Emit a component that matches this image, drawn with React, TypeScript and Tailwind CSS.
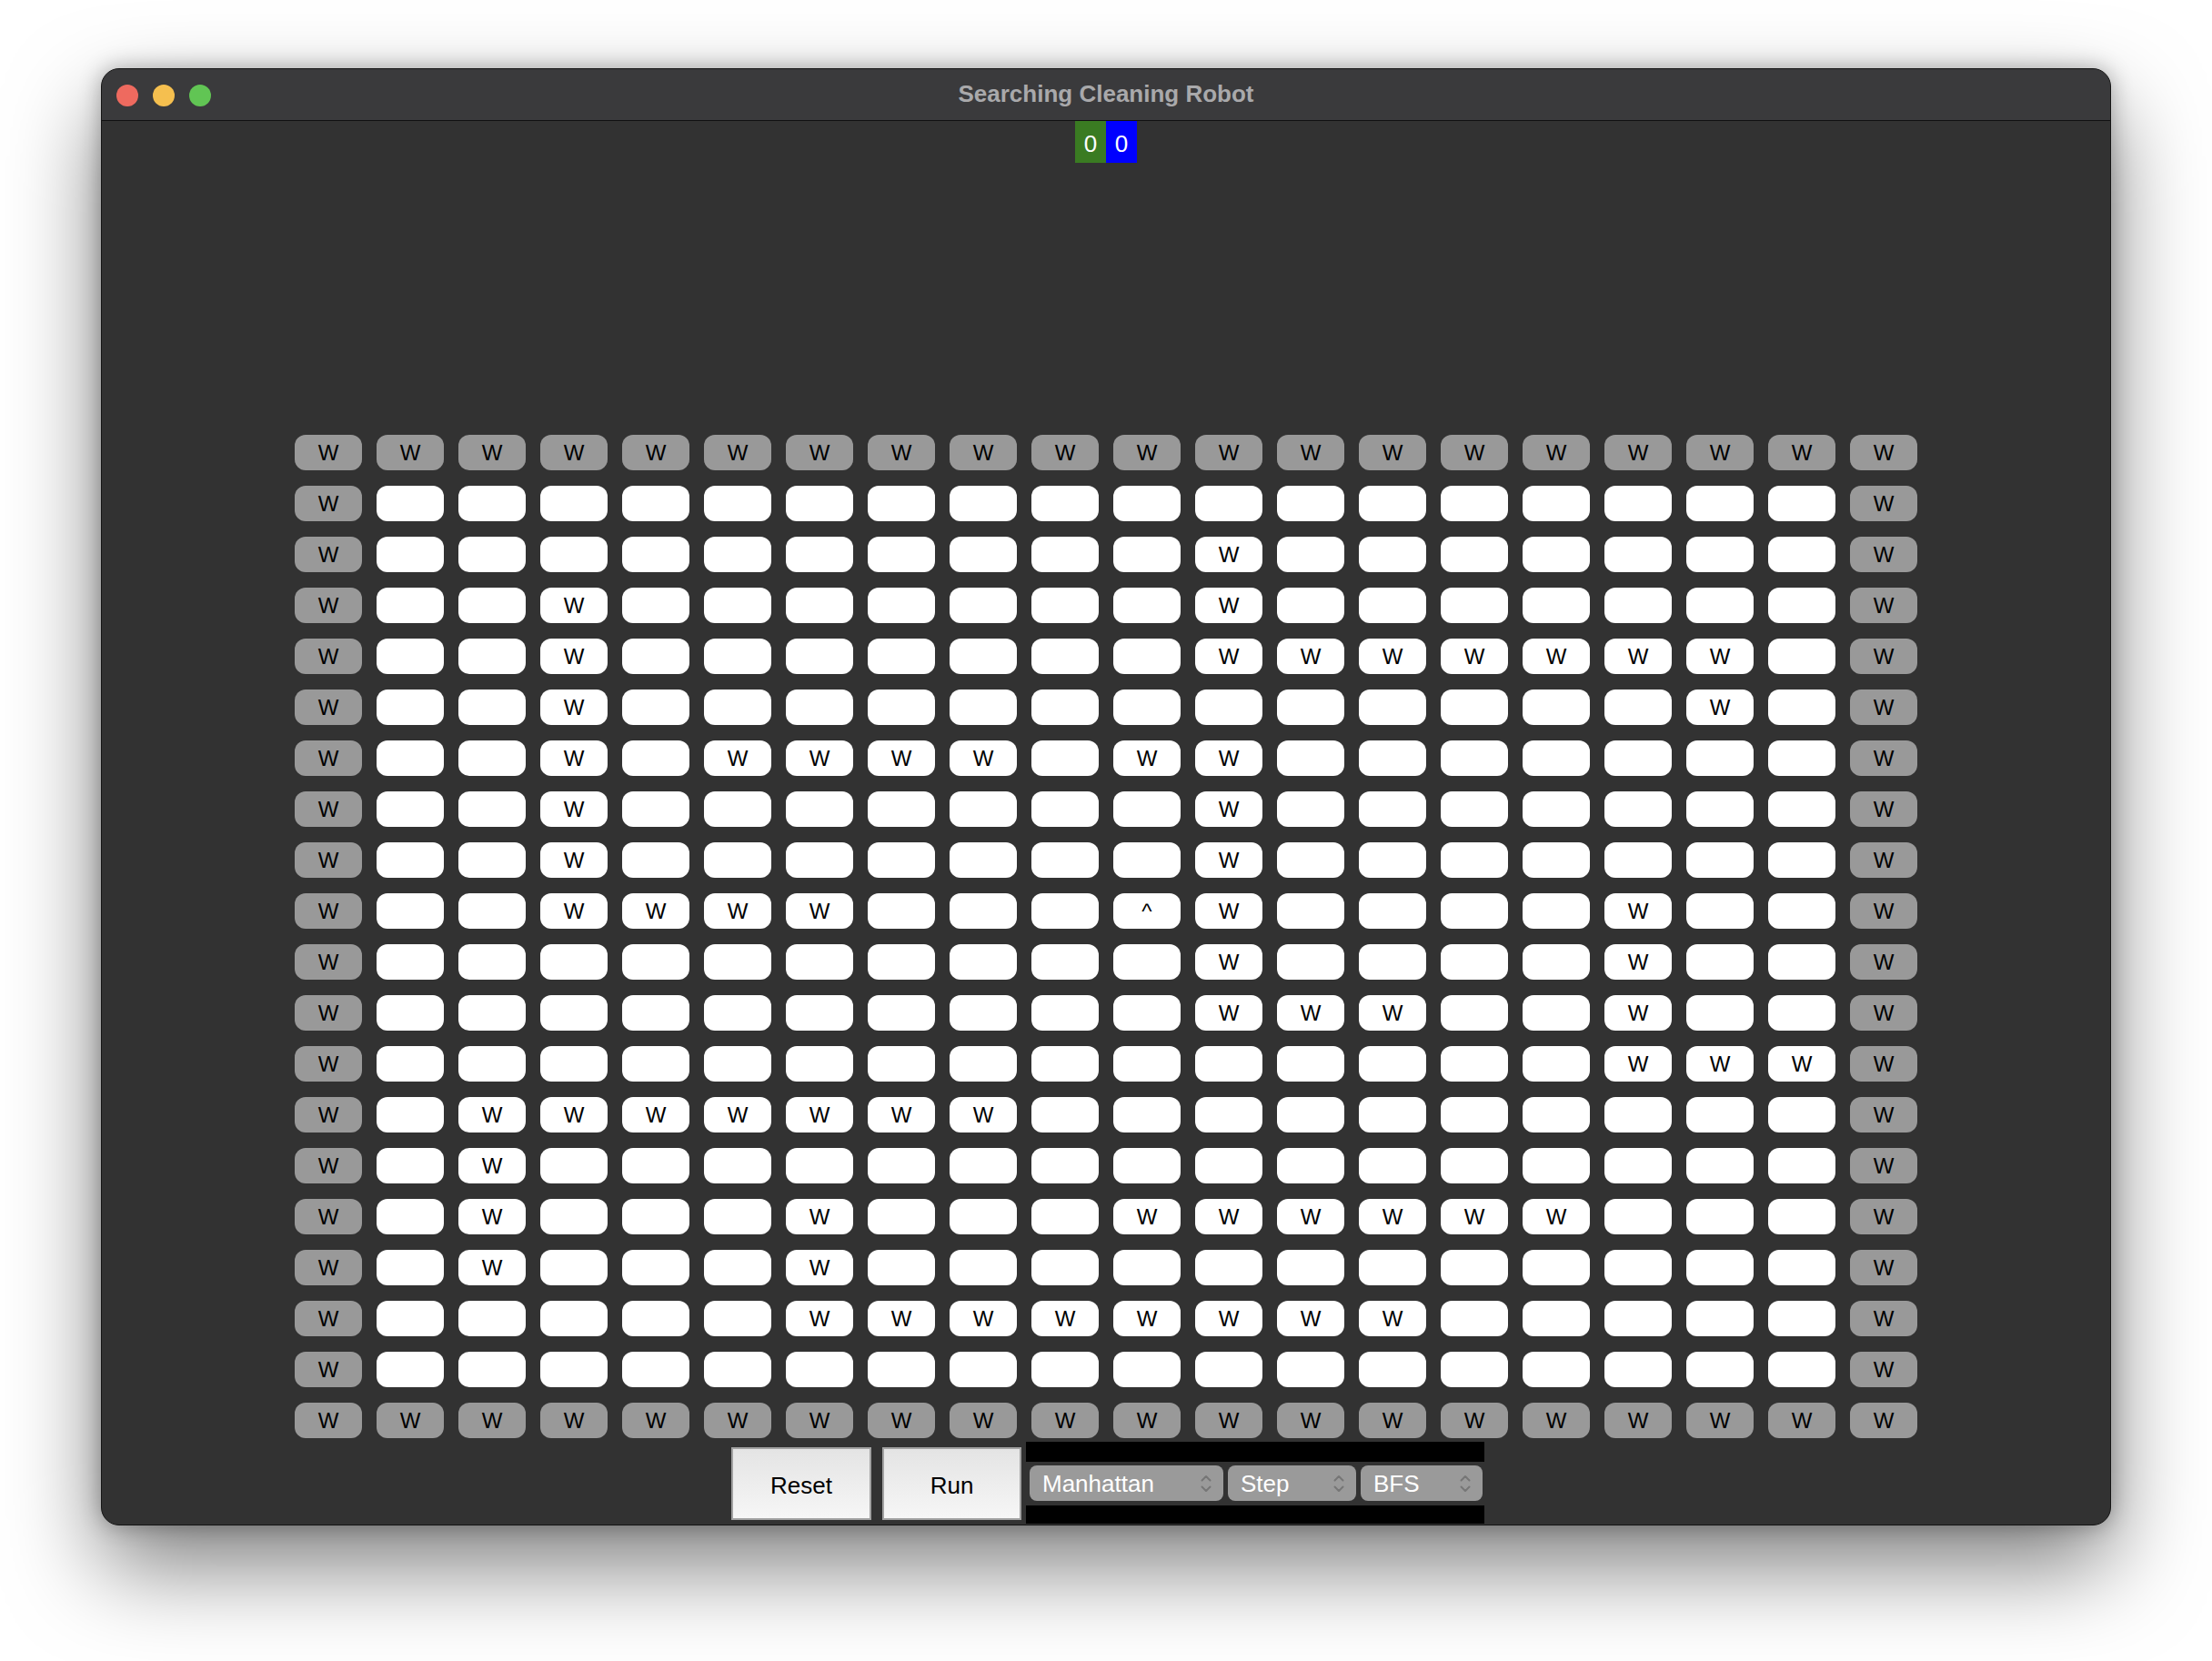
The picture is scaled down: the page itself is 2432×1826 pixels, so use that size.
import React from "react";

const WALLS: Record<number, number[]> = {
  2: [11],
  3: [3, 11],
  4: [3, 11, 12, 13, 14, 15, 16, 17],
  5: [3, 17],
  6: [3, 5, 6, 7, 8, 10, 11],
  7: [3, 11],
  8: [3, 11],
  9: [3, 4, 5, 6, 11, 16],
  10: [11, 16],
  11: [11, 12, 13, 16],
  12: [16, 17, 18],
  13: [2, 3, 4, 5, 6, 7, 8],
  14: [2],
  15: [2, 6, 10, 11, 12, 13, 14, 15],
  16: [2, 6],
  17: [6, 7, 8, 9, 10, 11, 12, 13],
};

type Kind = "edge" | "wall" | "empty" | "robot";

function cellKind(r: number, c: number): Kind {
  if (r === 0 || r === 19 || c === 0 || c === 19) return "edge";
  if (r === 9 && c === 10) return "robot";
  if ((WALLS[r] || []).includes(c)) return "wall";
  return "empty";
}

function Chevrons() {
  return (
    <svg width="14" height="22" viewBox="0 0 14 22" fill="none" stroke="#767676" strokeWidth="2" strokeLinecap="round" strokeLinejoin="round">
      <path d="M2.5 7.5 L7 3 L11.5 7.5" />
      <path d="M2.5 14.5 L7 19 L11.5 14.5" />
    </svg>
  );
}

function Select({ label, width }: { label: string; width: string }) {
  return (
    <div className={`${width} h-[39px] rounded-[8px] bg-[#9a9a9a] flex items-center justify-between pl-[14px] pr-[12px]`}>
      <span className="text-white text-[26px] leading-none">{label}</span>
      <Chevrons />
    </div>
  );
}

export default function App() {
  const rows = Array.from({ length: 20 }, (_, r) => r);
  const cols = Array.from({ length: 20 }, (_, c) => c);
  return (
    <div className="min-h-[1826px] w-full bg-white pt-[75px] pl-[111px] font-['Liberation_Sans',Arial,sans-serif]">
      <div className="w-[2210px] h-[1602px] rounded-[20px] border border-[#151515] bg-[#323232] overflow-hidden flex flex-col shadow-[0_45px_100px_rgba(0,0,0,0.5),0_0_24px_rgba(0,0,0,0.3)]">
        {/* Title bar */}
        <div className="h-[57px] shrink-0 bg-[#3a3a3c] border-b border-[#111] grid grid-cols-[1fr_auto_1fr] items-center">
          <div className="flex items-center gap-[16px] pl-[16px] pt-[1px]">
            <div className="w-[24px] h-[24px] rounded-full bg-[#ee6a5f]" />
            <div className="w-[24px] h-[24px] rounded-full bg-[#f5bf4f]" />
            <div className="w-[24px] h-[24px] rounded-full bg-[#61c554]" />
          </div>
          <div className="text-[26px] font-bold text-[#a9a9ab] leading-none pb-[3px]">Searching Cleaning Robot</div>
          <div />
        </div>

        {/* Score */}
        <div className="h-[46px] shrink-0 flex justify-center">
          <div className="w-[34px] h-[46px] bg-[#3a7b22] text-white text-[26px] flex items-center justify-center pt-[5px]">0</div>
          <div className="w-[34px] h-[46px] bg-[#0000ff] text-white text-[26px] flex items-center justify-center pt-[5px]">0</div>
        </div>

        {/* Grid */}
        <div className="mt-[299px] flex justify-center">
          <div className="grid grid-cols-[repeat(20,74px)] grid-rows-[repeat(20,39px)] gap-x-[16px] gap-y-[17px]">
            {rows.map((r) =>
              cols.map((c) => {
                const k = cellKind(r, c);
                const bg = k === "edge" ? "bg-[#999999]" : "bg-white";
                const txt = k === "edge" || k === "wall" ? "W" : k === "robot" ? "^" : "";
                return (
                  <div
                    key={`${r}-${c}`}
                    className={`${bg} rounded-[12px] flex items-center justify-center text-black text-[24px] leading-none`}
                  >
                    {txt}
                  </div>
                );
              })
            )}
          </div>
        </div>

        {/* Controls */}
        <div className="mt-[4px] h-[90px] shrink-0 flex justify-center items-center pl-[4px]">
          <button className="mt-[2px] w-[154px] h-[80px] border-2 border-[#a2a2a2] bg-gradient-to-b from-[#e4e4e4] to-[#f6f6f6] text-black text-[26px] pt-[4px]">
            Reset
          </button>
          <button className="mt-[2px] ml-[12px] w-[153px] h-[80px] border-2 border-[#a2a2a2] bg-gradient-to-b from-[#e4e4e4] to-[#f6f6f6] text-black text-[26px] pt-[4px]">
            Run
          </button>
          <div className="ml-[5px] w-[504px] h-[90px] flex flex-col">
            <div className="h-[22px] bg-black" />
            <div className="h-[48px] bg-[#323232] flex items-start pt-[4px] pl-[4px] gap-[5px]">
              <Select label="Manhattan" width="w-[213px]" />
              <Select label="Step" width="w-[141px]" />
              <Select label="BFS" width="w-[134px]" />
            </div>
            <div className="h-[20px] bg-black" />
          </div>
        </div>
      </div>
    </div>
  );
}
